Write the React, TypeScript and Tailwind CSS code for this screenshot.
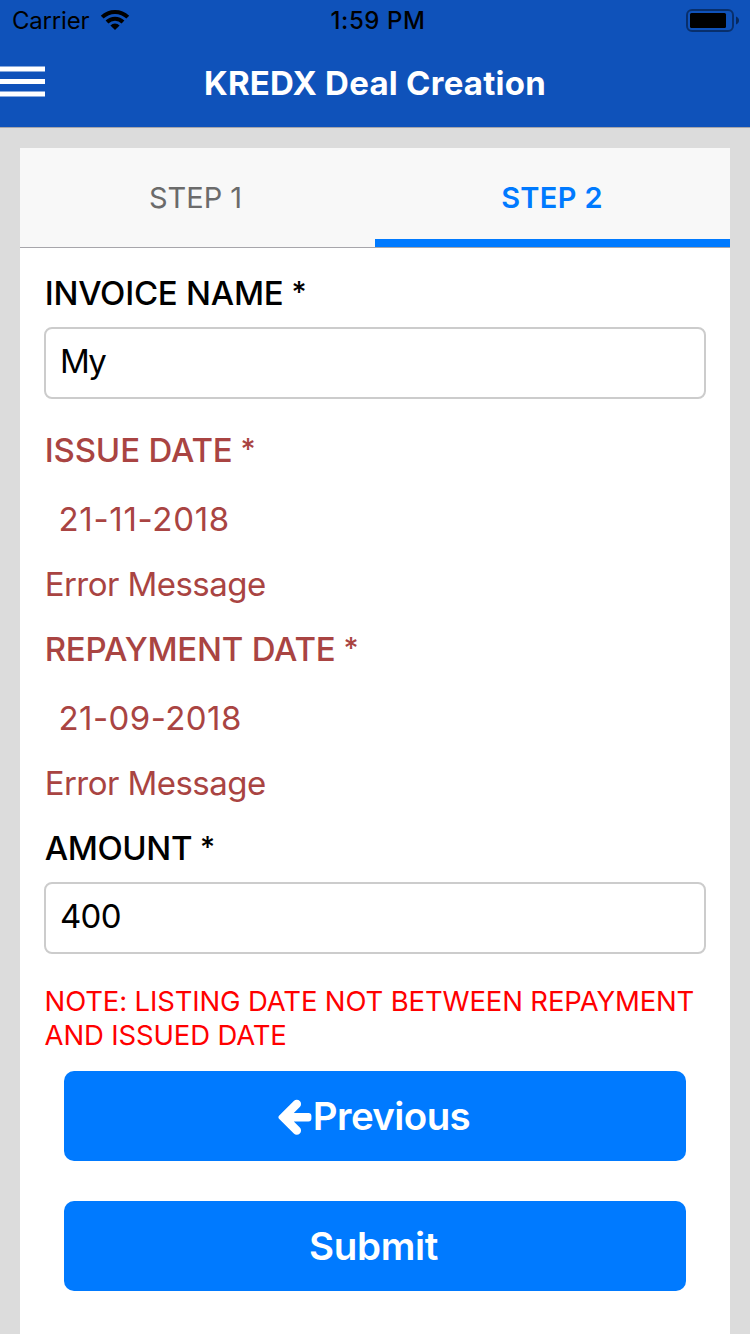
import type { ReactNode } from "react";

function WifiIcon() {
  return (
    <svg width="30" height="22" viewBox="0 0 30 22" fill="none" stroke="#000" strokeWidth="4" className="shrink-0">
      <path d="M2.2 8.2A18.2 18.2 0 0 1 27.8 8.2" />
      <path d="M7 13A11.4 11.4 0 0 1 23 13" />
      <path d="M10.4 16.4A6.5 6.5 0 0 1 19.6 16.4L15 21Z" fill="#000" stroke="none" />
    </svg>
  );
}

function BatteryIcon() {
  return (
    <svg width="54" height="24" viewBox="0 0 54 24" className="shrink-0">
      <rect x="1" y="1" width="46" height="21" rx="5" fill="none" stroke="#000" strokeOpacity="0.42" strokeWidth="2" />
      <rect x="4" y="4" width="36" height="15" rx="1.5" fill="#000" />
      <path d="M50 7.5C52.2 8.3 53 9.9 53 11.5S52.2 14.7 50 15.5Z" fill="#000" fillOpacity="0.5" />
    </svg>
  );
}

function MenuIcon() {
  return (
    <svg width="45" height="31" viewBox="0 0 45 31" fill="#fff" className="shrink-0">
      <rect y="0.5" width="45" height="5" />
      <rect y="13" width="45" height="5" />
      <rect y="25.5" width="45" height="5" />
    </svg>
  );
}

function ArrowLeftIcon() {
  return (
    <svg width="34" height="37" viewBox="0 0 34 37" fill="#fff" className="shrink-0">
      <path d="M1 16.7L15.8 1.9A4.2 4.2 0 0 1 21.8 7.9L15.8 13.9H30.4Q33.4 13.9 33.4 16.9V19.5Q33.4 22.5 30.4 22.5H15.8L21.8 28.5A4.2 4.2 0 0 1 15.8 34.5L1 19.7Q-0.2 18.2 1 16.7Z" />
    </svg>
  );
}

function Label({ children, spacing }: { children: ReactNode; spacing: string }) {
  return (
    <div className="flex h-10 items-start pl-[0.7px] text-[33px] leading-10 font-medium whitespace-pre">
      <span className={spacing}>{children}</span>
      <span className="pl-2 text-[29px] leading-[38px]">*</span>
    </div>
  );
}

function TextBox({ children }: { children: ReactNode }) {
  return (
    <div className="flex h-[72px] items-center rounded-lg border-2 border-[#ccc] bg-white pb-[5px] pl-[14px] text-[33px] leading-10">
      {children}
    </div>
  );
}

function DateField({ label, date, labelSpacing, dateSpacing }: { label: string; date: string; labelSpacing: string; dateSpacing: string }) {
  return (
    <div className="flex flex-col text-[#a94442]">
      <Label spacing={labelSpacing}>{label}</Label>
      <div className={`mt-[29px] pl-[14.5px] text-[33px] leading-10 ${dateSpacing}`}>{date}</div>
      <div className="mt-[25px] pl-[0.7px] text-[33px] leading-10 tracking-[-0.55px]">Error Message</div>
    </div>
  );
}

export default function App() {
  return (
    <div className="flex h-[1334px] w-[750px] flex-col overflow-hidden bg-[#dcdcdc] font-['Inter',sans-serif] text-black">
      <header className="flex h-32 shrink-0 flex-col border-b border-[#a7a6ab] bg-[#0f52ba]">
        <div className="grid h-10 grid-cols-[250px_1fr_250px] items-start pr-[10px] pl-3 text-2xl leading-[42px]">
          <div className="flex items-start">
            <span className="w-[88px] tracking-[-0.2px]">Carrier</span>
            <span className="pt-[9px]"><WifiIcon /></span>
          </div>
          <span className="pl-1 text-center font-medium tracking-[0.6px]">1:59 PM</span>
          <span className="flex justify-end pt-[9px]"><BatteryIcon /></span>
        </div>
        <div className="grid h-[87px] grid-cols-[45px_1fr_45px] items-center pb-1">
          <MenuIcon />
          <h1 className="pt-[2px] text-center text-[33px] leading-[44px] font-bold tracking-[0.25px] text-white">KREDX Deal Creation</h1>
        </div>
      </header>
      <main className="mx-5 mt-5 flex flex-1 flex-col bg-white">
        <div className="grid h-[100px] shrink-0 grid-cols-2 border-b border-[#a7a6ab] bg-[#f8f8f8] text-[29px]">
          <div className="flex items-center justify-center pr-1 text-[#6b6b6b]">STEP 1</div>
          <div className="flex items-center justify-center border-b-8 border-[#007aff] pt-2 pr-[1px] font-semibold tracking-[0.35px] text-[#007aff]">STEP 2</div>
        </div>
        <form className="flex flex-col px-6 pt-[25px]">
          <Label spacing="tracking-[-0.25px]">INVOICE NAME</Label>
          <div className="mt-[14px]">
            <TextBox><span className="tracking-[-1.8px]">My</span></TextBox>
          </div>
          <div className="mt-[31px] flex flex-col gap-[25px]">
            <DateField label="ISSUE DATE" date="21-11-2018" labelSpacing="tracking-[-0.15px]" dateSpacing="tracking-[0.7px]" />
            <DateField label="REPAYMENT DATE" date="21-09-2018" labelSpacing="tracking-[-0.21px]" dateSpacing="tracking-[0.45px]" />
          </div>
          <div className="mt-[25px]">
            <Label spacing="tracking-[-0.4px]">AMOUNT</Label>
          </div>
          <div className="mt-[14px]">
            <TextBox><span className="tracking-[-0.7px]">400</span></TextBox>
          </div>
          <p className="mt-[30px] pl-[0.6px] text-[27.5px] leading-[34px] tracking-[-0.15px] whitespace-nowrap text-[#ff0000]">
            NOTE: LISTING DATE NOT BETWEEN REPAYMENT
            <br />
            AND ISSUED DATE
          </p>
          <div className="mt-[19px] flex flex-col gap-10 px-5">
            <button type="button" className="flex h-[90px] items-center justify-center gap-[1px] rounded-[10px] bg-[#007aff] pt-[2px] pr-[2px] text-[38.5px] font-semibold tracking-[-0.6px] text-white">
              <ArrowLeftIcon />
              <span>Previous</span>
            </button>
            <button type="button" className="flex h-[90px] items-center justify-center rounded-[10px] bg-[#007aff] pt-[2px] pr-[3px] text-[38.5px] font-semibold tracking-[-0.3px] text-white">
              Submit
            </button>
          </div>
        </form>
      </main>
    </div>
  );
}
